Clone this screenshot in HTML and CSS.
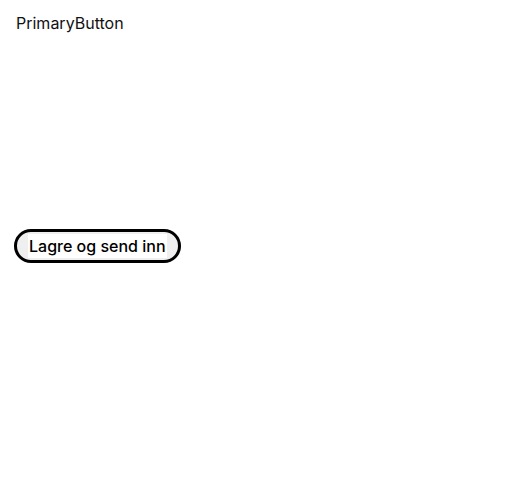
FILE: index.html
```html
<!DOCTYPE html>
<html>
<head>
<meta charset="utf-8">
<link rel="stylesheet" href="styles.css">
</head>
<body>
<div class="page">
  <div class="title">PrimaryButton</div>
  <div class="stage">
    <button class="primary-btn"><span class="label">Lagre og send inn</span></button>
  </div>
</div>
</body>
</html>
```

FILE: styles.css
```css
html, body {
  margin: 0;
  padding: 0;
  background: #ffffff;
}
.page {
  padding: 13px 14px;
  font-family: Inter, "Noto Sans", sans-serif;
  color: #111;
}
.title {
  font-size: 16px;
  line-height: 20px;
  font-weight: 400;
  margin-left: 2px;
}
.stage {
  padding-top: 196px;
}
.primary-btn {
  box-sizing: border-box;
  display: inline-flex;
  align-items: center;
  justify-content: center;
  height: 34px;
  padding: 0 11px;
  margin: 0;
  border: 3px solid #000;
  border-radius: 999px;
  background: #efefef;
  font-family: Inter, "Noto Sans", sans-serif;
  font-size: 16px;
  font-weight: 500;
  color: #000;
  cursor: pointer;
}
.label {
  background: #fff;
  line-height: 24px;
  padding: 0 1px;
}
```
